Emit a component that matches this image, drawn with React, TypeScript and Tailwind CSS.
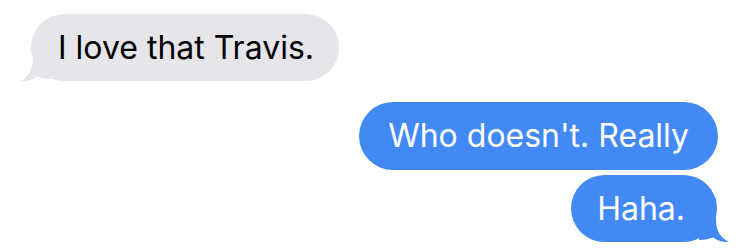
import React from "react";

function TailLeft({ color }: { color: string }) {
  return (
    <svg
      className="absolute left-[-12px] bottom-[-1px]"
      width="32"
      height="45"
      viewBox="0 0 32 45"
    >
      <path
        d="M32 0 L14 0 L14 22 C14 33 9 40 2 44 C8 44.5 14 42.5 18 39.5 C22 41 26 42 32 42 Z"
        fill={color}
      />
    </svg>
  );
}

function TailRight({ color }: { color: string }) {
  return (
    <svg
      className="absolute right-[-14px] bottom-[-1px]"
      width="32"
      height="45"
      viewBox="0 0 32 45"
    >
      <path
        d="M0 0 L17 0 L17 22 C17 33 22 40 30 44 C24 44.5 18 42.5 14 39.5 C10 41 6 42 0 42 Z"
        fill={color}
      />
    </svg>
  );
}

export default function App() {
  return (
    <div
      className="w-[750px] h-[251px] bg-white flex flex-col overflow-hidden"
      style={{ fontFamily: "Inter, 'Noto Sans', sans-serif" }}
    >
      <div className="relative self-start ml-[31px] mt-[14px] h-[67px] pl-[27px] pr-[25px] rounded-full bg-[#e5e5ea] flex items-center">
        <span className="relative z-10 text-[32px] text-black leading-none">I love that Travis.</span>
        <TailLeft color="#e5e5ea" />
      </div>
      <div className="relative self-end mr-[32px] mt-[21px] h-[68px] px-[29px] rounded-full bg-[#4389f5] flex items-center">
        <span className="relative z-10 text-[32px] text-white leading-none">Who doesn't. Really</span>
      </div>
      <div className="relative self-end mr-[33px] mt-[5px] h-[67px] pl-[26px] pr-[32px] rounded-full bg-[#4389f5] flex items-center">
        <span className="relative z-10 text-[32px] text-white leading-none">Haha.</span>
        <TailRight color="#4389f5" />
      </div>
    </div>
  );
}
